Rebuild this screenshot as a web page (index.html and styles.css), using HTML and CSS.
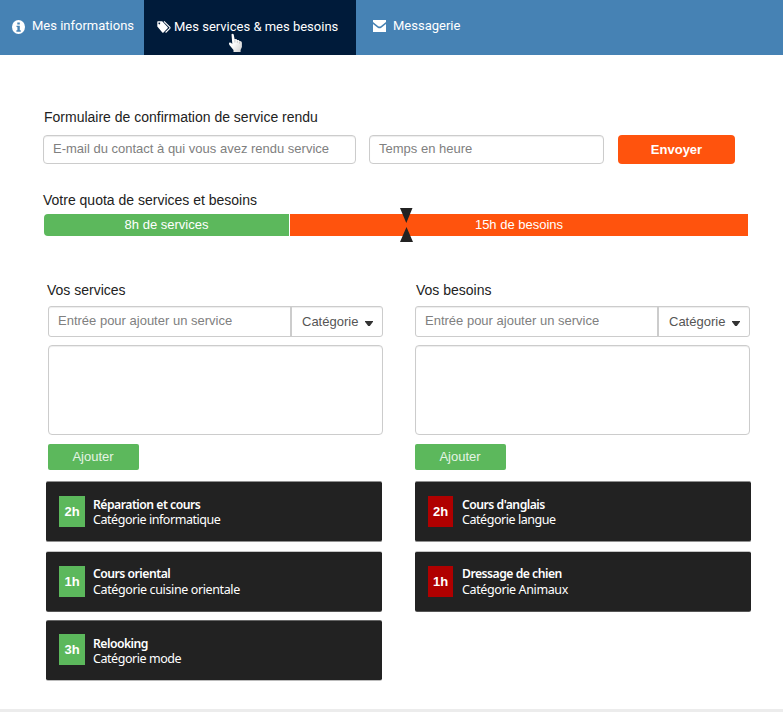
FILE: index.html
```html
<!DOCTYPE html>
<html lang="fr">
<head>
<meta charset="utf-8">
<title>Mes services &amp; mes besoins</title>
<link rel="stylesheet" href="styles.css">
</head>
<body>
<nav class="nav">
  <a class="tab tab-info"><svg class="icon-info" viewBox="0 0 13 14"><ellipse cx="6.5" cy="7" rx="6.5" ry="7" fill="#fff"/><path d="M5.3 2.4h2.5v2H5.3zM4.5 5.7h3.3v4.6h1v1.4H4.4v-1.4h1V7.1h-.9z" fill="#4682b4"/></svg><span>Mes informations</span></a>
  <a class="tab tab-active"><svg class="icon-tags" viewBox="0 0 14 12"><path fill="#fff" fill-rule="evenodd" d="M.3.8Q.3.2.9.2h4.3L10.600 6q.6.6 0 1.300L6.500 11.500q-.6.5-1.200 0L.3 5.400zM2.300 1.500a.9.9 0 1 0 .01 0z"/><path fill="none" stroke="#fff" stroke-width="1.100" d="M7 .4l5.800 5.700q.5.6 0 1.200L8.600 11.500"/></svg><span>Mes services &amp; mes besoins</span>
    <svg class="cursor" viewBox="0 0 15 20"><defs><linearGradient id="hand" x2="1" y2="1"><stop offset="0" stop-color="#fff"/><stop offset=".5" stop-color="#fafafa"/><stop offset="1" stop-color="#ccc"/></linearGradient></defs><path fill="url(#hand)" d="M3.500 1.200q1.200-1.200 2.200.2L6.600 6.200l1.700-.1.900 1 1.500-.1.900 1.100 1.400.2q.9.500.9 1.600v4L12.600 17v2H5.500v-2L1.600 12.300Q.2 10 1.800 9.500q1.200 0 2.500 1.400z"/><path d="M6.900 7v2.500M9.300 7.600v2.200M11.600 8.600v2" stroke="#999" stroke-width=".5"/></svg></a>
  <a class="tab tab-mail"><svg class="icon-mail" viewBox="0 0 13 12"><path fill="#fff" d="M0 0h13v2L7.700 6.200q-1.200.8-2.400 0L0 2zM0 4l4.700 3.700q1.800 1.300 3.600 0L13 4v8H0z"/></svg><span>Messagerie</span></a>
</nav>
<main>
  <section class="confirm">
    <h2 class="h-confirm">Formulaire de confirmation de service rendu</h2>
    <div class="row">
      <div class="field email">E-mail du contact à qui vous avez rendu service</div>
      <div class="field hours">Temps en heure</div>
      <button class="send">Envoyer</button>
    </div>
  </section>
  <section class="quota">
    <h2>Votre quota de services et besoins</h2>
    <div class="bar">
      <div class="given">8h de services</div>
      <div class="needed">15h de besoins</div>
      <svg class="marker" viewBox="0 0 13 34"><path fill="#222" d="M0 0h12.500L6.300 15zM0 34h13L6.500 19z"/></svg>
    </div>
  </section>
  <div class="columns">
    <section class="column services">
      <h2>Vos services</h2>
      <div class="form">
        <div class="group"><div class="entry">Entrée pour ajouter un service</div><div class="select"><span>Catégorie</span><svg class="caret" viewBox="0 0 8 5"><path d="M0 0h8v.8L4.800 5H3.200L0 .8z" fill="#333"/></svg></div></div>
        <div class="area"></div>
        <button class="add">Ajouter</button>
      </div>
      <div class="cards">
        <article class="card first"><b class="time">2h</b><div><h3>Réparation et cours</h3><p>Catégorie informatique</p></div></article>
        <article class="card second"><b class="time">1h</b><div><h3>Cours oriental</h3><p>Catégorie cuisine orientale</p></div></article>
        <article class="card third"><b class="time">3h</b><div><h3>Relooking</h3><p>Catégorie mode</p></div></article>
      </div>
    </section>
    <section class="column needs">
      <h2>Vos besoins</h2>
      <div class="form">
        <div class="group"><div class="entry">Entrée pour ajouter un service</div><div class="select"><span>Catégorie</span><svg class="caret" viewBox="0 0 8 5"><path d="M0 0h8v.8L4.800 5H3.200L0 .8z" fill="#333"/></svg></div></div>
        <div class="area"></div>
        <button class="add">Ajouter</button>
      </div>
      <div class="cards">
        <article class="card first"><b class="time">2h</b><div><h3>Cours d'anglais</h3><p>Catégorie langue</p></div></article>
        <article class="card second"><b class="time">1h</b><div><h3>Dressage de chien</h3><p>Catégorie Animaux</p></div></article>
      </div>
    </section>
  </div>
</main>
<footer></footer>
</body>
</html>
```
FILE: styles.css
```css
* { box-sizing: border-box; }
body { margin: 0; height: 712px; display: flex; flex-direction: column; overflow: hidden; background: #fff; font: 13px "Liberation Sans", Arial, sans-serif; color: #222; }
h2, h3, p { margin: 0; font-weight: 400; }
h2 { font-size: 14px; line-height: 18px; white-space: nowrap; }
button { border: 0; padding: 0; font: inherit; }
.nav { height: 55px; flex: none; display: flex; background: #4682b4; color: #fff; font: 13px/16px Roboto, sans-serif; white-space: nowrap; }
.tab { display: flex; align-items: flex-start; }
.tab-info { width: 144px; padding: 18px 0 0 12px; gap: 7px; }
.icon-info { width: 13px; height: 14px; margin-top: 2px; }
.tab-active { position: relative; width: 212px; padding: 19px 0 0 13px; gap: 3px; background: #001b3a; }
.icon-tags { width: 14px; height: 12px; margin-top: 2px; }
.tab-mail { padding: 18px 0 0 17px; gap: 7px; }
.icon-mail { width: 13px; height: 12px; margin-top: 2px; }
.cursor { position: absolute; left: 84px; top: 33px; width: 15px; height: 20px; }
main { flex: 1; padding: 53px 0 0 43px; }
.h-confirm { padding-left: 1px; }
.row { display: flex; margin-top: 9px; }
.field { height: 29px; border: 1px solid #ccc; border-radius: 4px; box-shadow: inset 0 1px 1px rgba(0,0,0,.075); color: #808080; line-height: 26px; padding-left: 9px; white-space: nowrap; }
.email { width: 313px; margin-right: 13px; }
.hours { width: 235px; margin-right: 14px; }
.send { width: 117px; height: 29px; border-radius: 4px; background: #ff530d; color: #fff; font-weight: 700; }
.quota { margin-top: 27px; }
.bar { position: relative; display: flex; width: 704px; height: 22px; margin: 5px 0 0 1px; color: #fff; line-height: 22px; text-align: center; }
.given { width: 245px; background: #5cb85c; border-radius: 4px 0 0 4px; margin-right: 1px; }
.needed { flex: 1; background: #ff530d; }
.marker { position: absolute; left: 356px; top: -6px; width: 13px; height: 34px; }
.columns { display: flex; margin-top: 45px; }
.column { width: 336px; }
.services { margin: 0 33px 0 3px; }
.column h2 { padding-left: 1px; }
.form { width: 335px; margin-top: 7px; }
.services .form { margin-left: 2px; }
.group { display: flex; height: 31px; border: 1px solid #ccc; border-radius: 3px; box-shadow: inset 0 1px 1px rgba(0,0,0,.075); }
.entry { width: 243px; padding-left: 9px; line-height: 28px; color: #808080; border-right: 2px solid #ccc; }
.select { flex: 1; display: flex; padding-left: 10px; line-height: 30px; color: #555; }
.caret { width: 8px; height: 5px; margin: 14px 0 0 7px; }
.area { height: 90px; margin-top: 8px; border: 1px solid #ccc; border-radius: 4px; box-shadow: inset 0 1px 1px rgba(0,0,0,.075); }
.add { display: block; width: 91px; height: 26px; margin-top: 9px; padding: 0 1px 1px 0; border-radius: 2px; background: #5cb85c; color: #e4f4e4; }
.cards { margin-top: 11px; }
.card { display: flex; height: 61px; padding: 14px 0 0 13px; border: solid #909090; border-width: 1px 0; border-radius: 2px; background: #222; color: #fff; }
.second { margin-top: 9px; border-color: #c4c4c4 transparent #555; }
.third { margin-top: 8px; padding-top: 13px; border-color: #666 transparent #bbb; }
.time { width: 26px; height: 31px; background: #5cb85c; line-height: 31px; text-align: center; margin-right: 8px; }
.needs .time { background: #b00000; width: 25px; margin-right: 9px; }
.card h3, .card p { font: 12.500px/14px "Noto Sans", sans-serif; letter-spacing: -.45px; white-space: nowrap; }
.card h3 { font-size: 12.200px; font-weight: 600; letter-spacing: -.5px; padding-top: 2px; }
.card p { padding-top: 1px; }
.card.second h3 { padding-top: 1px; }
.card.second p { padding-top: 2px; letter-spacing: -.38px; }
.card.third h3 { padding-top: 3px; }
footer { height: 3px; flex: none; background: #ececec; }
```
